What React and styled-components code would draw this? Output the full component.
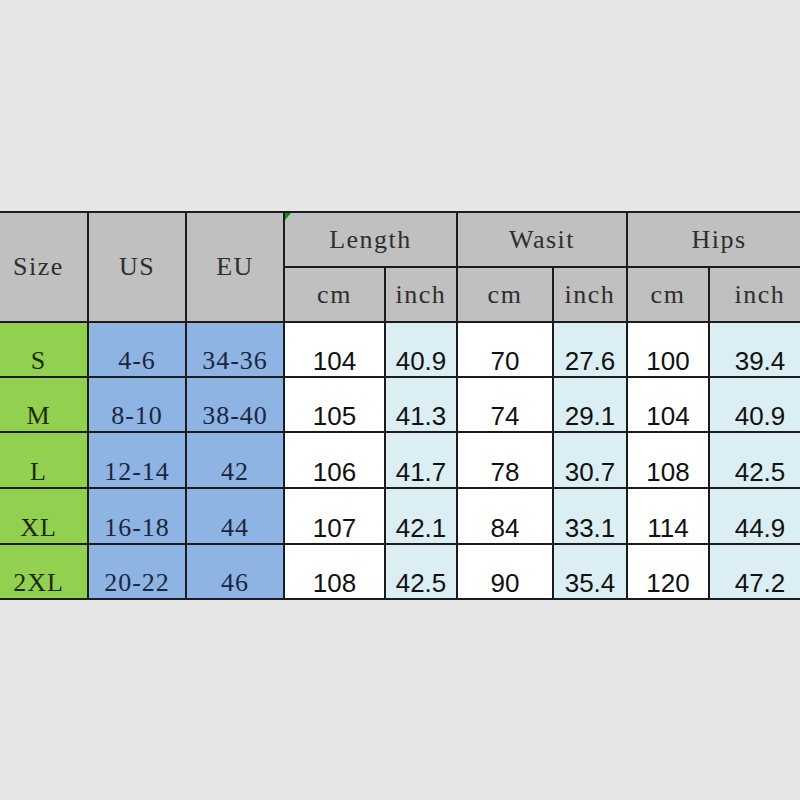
import React from 'react'
import styled, { createGlobalStyle } from 'styled-components'

const GlobalStyle = createGlobalStyle`
  html, body {
    margin: 0;
    padding: 0;
    background: #e6e6e6;
    overflow: hidden;
  }
`

const Page = styled.div`
  width: 800px;
  height: 800px;
  overflow: hidden;
  padding-top: 211px;
  box-sizing: border-box;
`

const Sheet = styled.div`
  display: grid;
  grid-template-columns: 97px 96px 96px 99px 70px 94px 72px 80px 100px;
  grid-template-rows: 53px 53px 53px 53px 54px 54px 53px;
  gap: 2px;
  padding: 2px 0;
  margin-left: -10px;
  width: 830px;
  background: #1c1c1c;
`

const fills = {
  head: '#c0c0c0',
  size: '#92d050',
  region: '#8db4e2',
  cm: '#ffffff',
  inch: '#daeef3',
}

const inks = {
  head: '#2e2e2e',
  size: '#1f2a0c',
  region: '#1b2640',
  cm: '#111111',
  inch: '#111111',
}

const Cell = styled.div`
  position: relative;
  display: flex;
  justify-content: center;
  align-items: ${(p) => (p.$bottom ? 'flex-end' : 'center')};
  padding-bottom: ${(p) => (p.$bottom ? '2px' : '0')};
  box-sizing: border-box;
  background: ${(p) => fills[p.$kind]};
  color: ${(p) => inks[p.$kind]};
  font-family: ${(p) =>
    p.$sans
      ? '"Liberation Sans", Arial, sans-serif'
      : '"Liberation Serif", "Times New Roman", serif'};
  font-size: 26px;
  line-height: 26px;
  letter-spacing: ${(p) => (p.$sans ? '0' : p.$kind === 'head' ? '1.5px' : '1px')};
  grid-column: ${(p) => p.$col || 'auto'};
  grid-row: ${(p) => p.$row || 'auto'};
`

const Marked = styled(Cell)`
  &::before {
    content: '';
    position: absolute;
    top: 0;
    left: 0;
    width: 0;
    height: 0;
    border-top: 7px solid #0b8a1e;
    border-right: 6px solid transparent;
  }
`

const rows = [
  ['S', '4-6', '34-36', '104', '40.9', '70', '27.6', '100', '39.4'],
  ['M', '8-10', '38-40', '105', '41.3', '74', '29.1', '104', '40.9'],
  ['L', '12-14', '42', '106', '41.7', '78', '30.7', '108', '42.5'],
  ['XL', '16-18', '44', '107', '42.1', '84', '33.1', '114', '44.9'],
  ['2XL', '20-22', '46', '108', '42.5', '90', '35.4', '120', '47.2'],
]

const kinds = ['size', 'region', 'region', 'cm', 'inch', 'cm', 'inch', 'cm', 'inch']

export default function App() {
  return (
    <Page>
      <GlobalStyle />
      <Sheet>
        <Cell $kind="head" $col="1" $row="1 / span 2">Size</Cell>
        <Cell $kind="head" $col="2" $row="1 / span 2">US</Cell>
        <Cell $kind="head" $col="3" $row="1 / span 2">EU</Cell>
        <Marked $kind="head" $col="4 / span 2" $row="1">Length</Marked>
        <Cell $kind="head" $col="6 / span 2" $row="1">Wasit</Cell>
        <Cell $kind="head" $col="8 / span 2" $row="1">Hips</Cell>
        {['cm', 'inch', 'cm', 'inch', 'cm', 'inch'].map((u, i) => (
          <Cell key={i} $kind="head" $col={String(i + 4)} $row="2">
            {u}
          </Cell>
        ))}
        {rows.map((r, ri) =>
          r.map((v, ci) => (
            <Cell key={`${ri}-${ci}`} $kind={kinds[ci]} $sans={ci > 2} $bottom>
              {v}
            </Cell>
          ))
        )}
      </Sheet>
    </Page>
  )
}
